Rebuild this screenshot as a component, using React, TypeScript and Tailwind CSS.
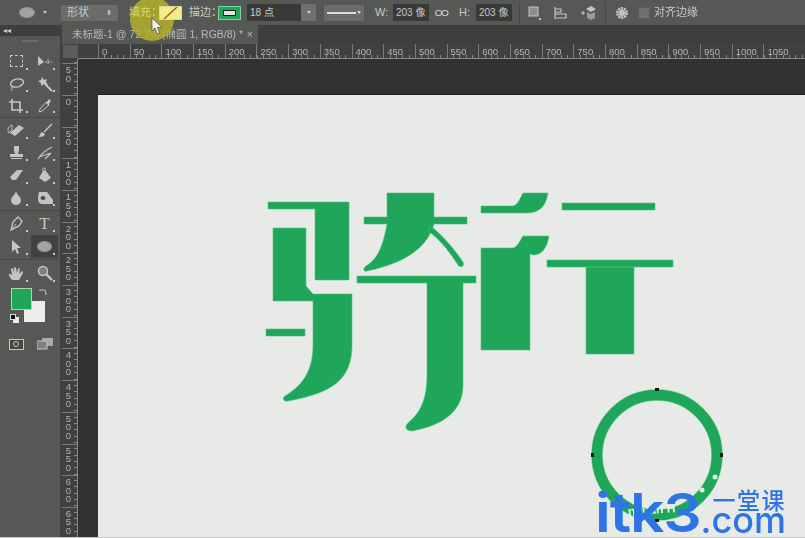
import React from "react";

const G = "#1fa65a";
const I = "#c4c5c2";

function Ico({ children, w = 18, h = 18, cls = "" }: { children: React.ReactNode; w?: number; h?: number; cls?: string }) {
  return (
    <svg width={w} height={h} viewBox={`0 0 ${w} ${h}`} className={cls} fill="none">
      {children}
    </svg>
  );
}

function Tool({ children, active }: { children: React.ReactNode; active?: boolean }) {
  return (
    <div className={`relative flex h-full items-center justify-center ${active ? "bg-[#41423f]" : ""}`}>
      {children}
      <span className="absolute bottom-[3px] right-[3px] h-[2px] w-[2px] bg-[#c9cac7]" />
    </div>
  );
}

function Row({ h, a, b, active }: { h: string; a: React.ReactNode; b: React.ReactNode; active?: boolean }) {
  return (
    <div className={`grid grid-cols-[30px_27px] pl-[1px] ${h}`}>
      <Tool>{a}</Tool>
      <Tool active={active}>{b}</Tool>
    </div>
  );
}

const Sep = () => <div className="my-[1px] h-px bg-[#474845]" />;

const marks = [0, 50, 100, 150, 200, 250, 300, 350, 400, 450, 500, 550, 600, 650, 700, 750, 800, 850, 900, 950, 1000, 1050];
const vmarks = ["50", "0", "50", "100", "150", "200", "250", "300", "350", "400", "450", "500", "550", "600", "650"];

function Opt203() {
  return (
    <div className="flex h-[17px] w-[36px] items-center overflow-hidden whitespace-nowrap bg-[#393a38] pl-[3px] text-[10px] text-[#c8c9c6]">
      203 像
    </div>
  );
}

function Logo() {
  return (
    <svg viewBox="98 95 707 443" className="absolute inset-0 h-full w-full">
      <g fill={G} stroke="#4fc680" strokeWidth="0.6">
        <path d="M268 202H349V280H315V209H268Z" />
        <path d="M273 228H306V286L313 294H352V345C352 380 332 393 288 401C283 402 282 398 285 396C305 384 313 368 313 345V301H273Z" />
        <rect x="266" y="329" width="39" height="7" />
        <path d="M387 193H434V217H467V224H434C428 245 410 262 367 271C363 272 363 268 366 266C380 258 384 240 387 224H364V217H387Z" />
        <path d="M431 226C445 238 455 250 463 262C465 267 460 268 458 265C451 254 441 240 428 231Z" />
        <path d="M357 276H476V283H463V385C463 410 445 425 412 431C406 431 404 427 408 423C420 413 427 400 427 375V283H357Z" />
        <path d="M481 206H513C518 205 520 198 523 193H548C546 206 540 213 526 213H481Z" />
        <rect x="562" y="203" width="93" height="7" />
        <path d="M481 248H513C518 247 520 240 523 236H549C547 248 542 255 533 255L530 254V350H481Z" />
        <rect x="547" y="260" width="126" height="7" />
        <rect x="586" y="267" width="48" height="87" />
      </g>
      <circle cx="657" cy="455" r="60" fill="none" stroke="#8fdcae" strokeWidth="11.8" />
      <circle cx="657" cy="455" r="60" fill="none" stroke={G} strokeWidth="10.6" />
      <g fill="#151515">
        <rect x="655" y="388" width="4" height="3" />
        <rect x="591" y="453" width="3" height="4" />
        <rect x="720" y="453" width="3" height="4" />
        <rect x="655" y="519" width="4" height="3" />
      </g>
      <circle cx="702" cy="490" r="2.5" fill="#e9ebe9" />
      <circle cx="715" cy="477" r="2.5" fill="#d4efdf" />
      <text x="628" y="514" transform="rotate(-4 650 510)" fill="#e6f5ec" fontSize="12" fontWeight="700" fontFamily="'Liberation Sans', sans-serif">
        nyuan H
      </text>
    </svg>
  );
}

export default function App() {
  return (
    <div className="h-[538px] w-[805px] overflow-hidden bg-[#30322f]">
      <div className="relative flex h-[538px] w-[805px] flex-col overflow-hidden blur-[0.5px] [font-family:'Liberation_Sans','Noto_Sans_CJK_SC',sans-serif]">
        {/* Options bar */}
        <div className="flex h-[25px] shrink-0 items-center bg-[#565855] text-[11px] text-[#c9cac7]">
          <div className="ml-[19px] h-[11px] w-[16px] rounded-[50%] border border-[#8f908d] bg-[#a3a4a1]" />
          <div className="ml-[8px] h-0 w-0 border-x-[2.5px] border-t-[3px] border-x-transparent border-t-[#c9cac7]" />
          <div className="ml-[14px] flex h-[16px] w-[57px] items-center justify-between rounded-[1px] bg-[#6b6c69] px-[6px]">
            <span>形状</span>
            <span className="text-[7px] leading-[7px]">⬍</span>
          </div>
          <span className="relative z-10 ml-[11px] w-[30px] whitespace-nowrap text-[#dcd86a]">填充：</span>
          <div className="relative z-10 h-[14px] w-[23px] overflow-hidden border border-[#d8d8a0] bg-[#f2ee86]">
            <svg width="21" height="12" viewBox="0 0 21 12">
              <path d="M4 12L17 0" stroke="#c4483a" strokeWidth="1.4" />
            </svg>
          </div>
          <span className="ml-[7px] w-[29px] whitespace-nowrap">描边：</span>
          <div className="flex h-[14px] w-[23px] items-center justify-center border border-[#7fd0a0] bg-[#1fa65a]">
            <div className="h-[6px] w-[13px] border border-[#1a1a1a] bg-[#dfe6df]" />
          </div>
          <div className="ml-[6px] flex h-[17px] w-[54px] items-center bg-[#393a38] pl-[3px] text-[10px]">18 点</div>
          <div className="flex h-[17px] w-[15px] items-center justify-center bg-[#6f706d]">
            <div className="h-0 w-0 border-x-[2px] border-t-[3px] border-x-transparent border-t-[#d5d5d3]" />
          </div>
          <div className="ml-[8px] flex h-[16px] w-[40px] items-center justify-between bg-[#6b6c69] pl-[3px] pr-[3px]">
            <div className="h-[2px] w-[29px] bg-[#dcdcda]" />
            <div className="h-0 w-0 border-x-[2px] border-t-[3px] border-x-transparent border-t-[#d5d5d3]" />
          </div>
          <span className="ml-[11px] w-[18px]">W:</span>
          <Opt203 />
          <div className="ml-[6px] flex w-[24px]">
            <Ico w={14} h={8}>
              <rect x="0.6" y="1.5" width="6" height="5" rx="2.5" stroke={I} strokeWidth="1.2" />
              <rect x="7" y="1.5" width="6" height="5" rx="2.5" stroke={I} strokeWidth="1.2" />
            </Ico>
          </div>
          <span className="w-[17px]">H:</span>
          <Opt203 />
          <div className="ml-[7px] h-[22px] w-px bg-[#474845]" />
          <div className="ml-[7px] flex w-[78px] items-center gap-[13px]">
            <Ico w={14} h={14}>
              <rect x="2" y="1" width="9" height="9" fill="#8d8e8b" stroke={I} />
              <rect x="12" y="12" width="2" height="2" fill={I} />
            </Ico>
            <Ico w={14} h={14}>
              <path d="M1 1V13M1 3H7V6H1M1 8H12V12H1" stroke={I} strokeWidth="1.2" />
            </Ico>
            <Ico w={16} h={16}>
              <path d="M0 8H4M2 6V10" stroke={I} />
              <path d="M10 1L15 4L10 7L5 4Z" fill={I} />
              <path d="M6 7V13L10 15L14 13V7L10 9Z" fill="#9a9b98" />
            </Ico>
          </div>
          <div className="h-[22px] w-px bg-[#474845]" />
          <div className="ml-[9px]">
            <Ico w={14} h={14}>
              <circle cx="7" cy="7" r="4.5" fill="none" stroke={I} strokeWidth="3" strokeDasharray="2 0.8" />
              <circle cx="7" cy="7" r="3" fill={I} />
            </Ico>
          </div>
          <div className="ml-[9px] h-[12px] w-[12px] rounded-[1px] border border-[#5d5e5b] bg-[#70716e]" />
          <span className="ml-[4px] whitespace-nowrap">对齐边缘</span>
        </div>

        <div className="flex min-h-0 flex-1">
          {/* Tools */}
          <div className="relative w-[60px] shrink-0 bg-[#565855]">
            <div className="flex h-[11px] items-center bg-[#3d3f3c] pl-[3px] text-[8px] leading-none text-[#c9cac7]">◂◂</div>
            <div className="mx-auto mt-[4px] h-[2px] w-[16px] bg-[#6c6d6a]" />
            <div className="h-[7px]" />
            <Row
              h="h-[24px]"
              a={<div className="h-[12px] w-[13px] border border-dashed border-[#c4c5c2]" />}
              b={
                <Ico w={16} h={12}>
                  <path d="M1 1V11L7 7Z" fill={I} />
                  <path d="M11 4V10M8 7H15" stroke={I} strokeDasharray="2 1" />
                </Ico>
              }
            />
            <Row
              h="h-[22px]"
              a={
                <Ico w={16} h={14}>
                  <ellipse cx="9" cy="6" rx="6.5" ry="4" stroke={I} strokeWidth="1.4" transform="rotate(-12 9 6)" />
                  <path d="M4 9C3 11 5 13 3 14" stroke={I} />
                </Ico>
              }
              b={
                <Ico w={16} h={16}>
                  <path d="M8 8L15 15" stroke={I} strokeWidth="2" />
                  <path d="M5 1L7 4L10 3L9 6L11 9L7 8L4 10L4 7L1 5L4 4Z" fill={I} />
                </Ico>
              }
            />
            <Row
              h="h-[21px]"
              a={
                <Ico w={14} h={14}>
                  <path d="M3 0V11H14M0 3H11V14" stroke={I} strokeWidth="1.7" />
                </Ico>
              }
              b={
                <Ico w={14} h={15}>
                  <path d="M1 14L2 11L8 4L11 7L4 13Z" stroke={I} />
                  <path d="M8 5L11 1L13 3L10 7Z" fill={I} />
                </Ico>
              }
            />
            <Sep />
            <Row
              h="h-[22.5px]"
              a={
                <Ico w={18} h={15}>
                  <path d="M5 2C1 3 0 7 2 10L5 7Z" stroke={I} />
                  <path d="M3 10L12 2L17 5L8 13Z" fill={I} />
                </Ico>
              }
              b={
                <Ico w={16} h={15}>
                  <path d="M7 9L15 1" stroke={I} strokeWidth="1.4" />
                  <path d="M1 14C3 13 3 10 5 9L8 11C7 14 4 14 1 14Z" fill={I} />
                </Ico>
              }
            />
            <Row
              h="h-[22.5px]"
              a={
                <Ico w={15} h={15}>
                  <path d="M5 1H10V5L9 9H14V12H1V9H6L5 5ZM2 13H13V14H2Z" fill={I} />
                </Ico>
              }
              b={
                <Ico w={16} h={14}>
                  <path d="M1 13C4 8 9 4 15 1M2 11L14 7L8 13" stroke={I} strokeWidth="1.3" />
                </Ico>
              }
            />
            <Row
              h="h-[22.5px]"
              a={
                <Ico w={15} h={12}>
                  <path d="M1 8L8 1H14L7 11H3Z" fill={I} />
                </Ico>
              }
              b={
                <Ico w={14} h={16}>
                  <circle cx="6" cy="2.5" r="1.5" stroke={I} />
                  <path d="M5 4H8L13 11L7 15L1 11Z" fill={I} />
                </Ico>
              }
            />
            <Row
              h="h-[22.5px]"
              a={
                <Ico w={12} h={14}>
                  <path d="M6 0C7 4 11 6 11 9.5A5 4.5 0 0 1 1 9.5C1 6 5 4 6 0Z" fill={I} />
                </Ico>
              }
              b={
                <Ico w={18} h={14}>
                  <path d="M3 1H11L17 9V13H6C2 13 1 8 3 1Z" fill={I} />
                  <ellipse cx="7" cy="7" rx="2.5" ry="2" fill="#4a4b48" />
                </Ico>
              }
            />
            <Sep />
            <Row
              h="h-[23px]"
              a={
                <Ico w={14} h={15}>
                  <path d="M9 1L13 5L10 10L2 14L4 6Z" stroke={I} strokeWidth="1.4" />
                  <path d="M2 14L7 8" stroke={I} />
                </Ico>
              }
              b={<span className="text-[17px] leading-none text-[#c4c5c2] [font-family:'Liberation_Serif',serif]">T</span>}
            />
            <Row
              h="h-[23px]"
              active
              a={
                <Ico w={10} h={14}>
                  <path d="M1 0V12L4 9L6 14L8 13L6 8L10 8Z" fill={I} />
                </Ico>
              }
              b={<div className="h-[11px] w-[15px] rounded-[50%] border border-[#8f908d] bg-[#a3a4a1]" />}
            />
            <Sep />
            <Row
              h="h-[24px]"
              a={
                <Ico w={16} h={15}>
                  <path d="M4 14C2 11 0 9 1 8C2 7 3 9 4 9L3 3C3 2 5 2 5 3L6 7L6 2C6 1 8 1 8 2L9 7L10 3C10 2 12 2 12 3L11 8L14 5C15 5 15 6 15 7L11 14Z" fill={I} />
                </Ico>
              }
              b={
                <Ico w={16} h={16}>
                  <circle cx="6" cy="6" r="4.5" stroke={I} strokeWidth="1.5" fill="#7f807d" />
                  <path d="M9 9L15 15" stroke={I} strokeWidth="2.4" />
                </Ico>
              }
            />
            {/* Colour swatches */}
            <div className="relative h-[44px]">
              <div className="absolute left-[24px] top-[16px] h-[21px] w-[21px] bg-[#eceeec]" />
              <div className="absolute left-[11px] top-[3px] h-[22px] w-[21px] border border-[#a8d8b8] bg-[#1fa65a]" />
              <div className="absolute left-[38px] top-[2px]">
                <Ico w={10} h={10}>
                  <path d="M1 3H6C8 3 8 5 8 8" stroke={I} strokeWidth="1.2" />
                </Ico>
              </div>
              <div className="absolute left-[13px] top-[32px] h-[6px] w-[6px] bg-[#eceeec]" />
              <div className="absolute left-[10px] top-[29px] h-[6px] w-[6px] border border-[#dcdcda] bg-[#111]" />
            </div>
            <div className="mt-[7px] grid h-[16px] grid-cols-[30px_27px] pl-[1px]">
              <div className="flex items-center justify-center">
                <div className="flex h-[11px] w-[15px] items-center justify-center border border-[#c4c5c2] bg-[#45463f]">
                  <div className="h-[6px] w-[6px] rounded-full border border-[#c4c5c2]" />
                </div>
              </div>
              <div className="flex items-center justify-center">
                <Ico w={16} h={12}>
                  <rect x="5" y="0" width="11" height="8" fill="#a8a9a6" />
                  <rect x="0" y="3" width="10" height="8" fill="#7f807d" stroke={I} />
                </Ico>
              </div>
            </div>
          </div>
          <div className="w-[2px] shrink-0 bg-[#3f413e]" />

          {/* Document area */}
          <div className="flex min-w-0 flex-1 flex-col">
            <div className="flex h-[19px] shrink-0 bg-[#3d3f3c]">
              <div className="flex h-full w-[196px] items-center justify-between bg-[#565855] pl-[10px] pr-[5px] text-[10.5px] text-[#b9bab7]">
                <span className="whitespace-nowrap">未标题-1 @ 72.7% (椭圆 1, RGB/8) *</span>
                <span>×</span>
              </div>
            </div>
            {/* Horizontal ruler */}
            <div className="flex h-[15px] shrink-0 bg-[#3f413e]">
              <div className="m-[1px] mr-0 h-[13px] w-[15px] shrink-0 bg-[#5c5d5a]" />
              <div className="w-[20px] shrink-0 border-b border-[#8a8b88]" />
              <div className="flex flex-1 overflow-hidden border-b border-[#8a8b88] bg-[repeating-linear-gradient(90deg,#8a8b88_0,#8a8b88_1px,transparent_1px,transparent_6.34px)] bg-[length:100%_3px] bg-bottom bg-no-repeat">
                {marks.map((m) => (
                  <div key={m} className="h-[15px] w-[31.7px] shrink-0 border-l border-[#7b7c79] pl-[3px] text-[9.5px] leading-[15px] text-[#b5b6b3]">
                    {m}
                  </div>
                ))}
              </div>
            </div>

            <div className="flex min-h-0 flex-1">
              {/* Vertical ruler */}
              <div className="flex w-[16px] shrink-0 flex-col overflow-hidden border-r border-[#8a8b88] bg-[#3f413e] bg-[repeating-linear-gradient(0deg,#8a8b88_0,#8a8b88_1px,transparent_1px,transparent_6.34px)] bg-[length:3px_100%] bg-right bg-no-repeat">
                <div className="h-[4.3px] shrink-0" />
                {vmarks.map((m, i) => (
                  <div key={i} className="flex h-[31.7px] w-full shrink-0 justify-center border-t border-[#7b7c79] pr-[2px] pt-[2px] text-[9.5px] leading-[8.5px] text-[#b5b6b3]">
                    <span className="w-[6px] break-all text-center">{m}</span>
                  </div>
                ))}
              </div>
              {/* Pasteboard */}
              <div className="flex min-w-0 flex-1 flex-col bg-[#30322f] pl-[20px] pt-[35px]">
                <div className="relative flex-1 border-t border-[#1f201e] bg-[#e8eae8]">
                  <div className="absolute left-0 top-0 h-[443px] w-[707px]">
                    <Logo />
                    <div className="absolute left-[497px] top-[391px] flex items-start text-[#2f74e4] [font-family:'Inter',sans-serif]">
                      <div className="w-[105px]">
                        <span className="inline-block origin-left scale-x-[1.12] text-[54px] font-semibold leading-[54px] tracking-[-1px]">itk3</span>
                      </div>
                      <div className="flex w-[86px] flex-col items-end">
                        <span className="text-[23px] font-medium leading-[26px] tracking-[1.5px] [font-family:'Noto_Sans_CJK_SC',sans-serif]">一堂课</span>
                        <span className="-mt-[6px] text-[36px] font-medium leading-[28px]">.com</span>
                      </div>
                    </div>
                  </div>
                </div>
              </div>
            </div>
          </div>
        </div>

        {/* Cursor highlight */}
        <div className="pointer-events-none absolute left-[130px] top-[-3px] h-[44px] w-[44px] rounded-full bg-[#b3b02a]/85" />
        <div className="pointer-events-none absolute left-[151px] top-[18px]">
          <Ico w={12} h={17}>
            <path d="M1 0V13L4 10L6 16L8.5 15L6.5 9.5L11 9.5Z" fill="#f2f2f0" stroke="#333" strokeWidth="0.6" />
          </Ico>
        </div>
        <div className="absolute bottom-0 left-0 h-px w-full bg-[#c9cbc9]" />
      </div>
    </div>
  );
}
